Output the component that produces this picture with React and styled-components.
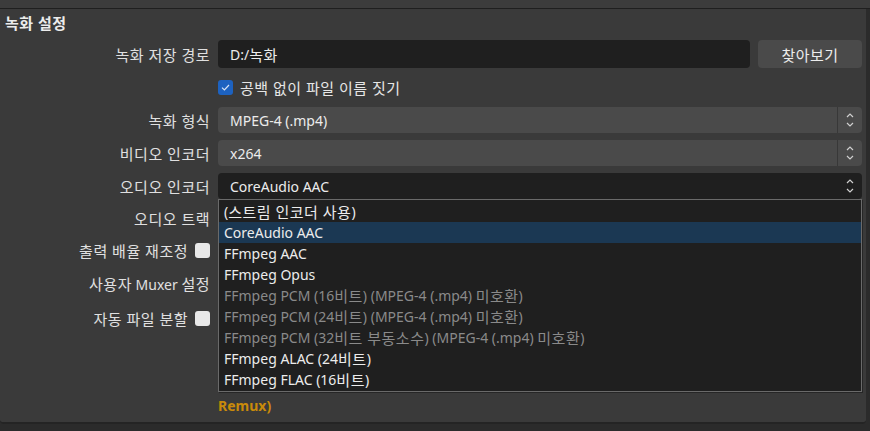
import styled, { createGlobalStyle } from "styled-components";

const GlobalStyle = createGlobalStyle`
  html, body {
    margin: 0;
    padding: 0;
    background: #2b2b2b;
  }
  body {
    font-family: "Noto Sans", "Noto Sans CJK KR", sans-serif;
    font-size: 14px;
    color: #e2e2e2;
  }
`;

const Page = styled.div`
  width: 870px;
  height: 431px;
  overflow: hidden;
  display: flex;
  flex-direction: column;
  background: #2b2b2b;
`;

const PrevGroup = styled.div`
  height: 8px;
  flex: none;
  background: #3c3c3c;
  border-bottom: 1px solid #1f1f1f;
`;

const GroupBox = styled.section`
  height: 415px;
  flex: none;
  margin-right: 4px;
  background: #3a3a3a;
  border-bottom: 2px solid #242424;
  border-radius: 0 0 4px 4px;
  box-sizing: border-box;
`;

const GroupTitle = styled.h2`
  margin: 3px 0 0 5px;
  height: 20px;
  display: flex;
  align-items: center;
  font-size: 14px;
  font-weight: 700;
  color: #ececec;
`;

/* Hangul runs are drawn a little larger and looser, like the Windows UI font */
const Ko = styled.span`
  font-size: 15px;
  letter-spacing: 0.5px;
`;

const Form = styled.div`
  margin-top: 8px;
  display: grid;
  grid-template-columns: 210px 1fr;
  column-gap: 8px;
  row-gap: 7px;
  padding-right: 4px;
`;

const Label = styled.div`
  height: ${(p) => p.$h || 26}px;
  display: flex;
  align-items: center;
  justify-content: flex-end;
  gap: 7px;
  white-space: nowrap;
  color: #e0e0e0;
`;

const Field = styled.div`
  height: ${(p) => p.$h || 26}px;
  position: relative;
`;

const PathRow = styled.div`
  display: flex;
  gap: 8px;
  height: 28px;
`;

const TextInput = styled.div`
  flex: 1;
  background: #1f1f1f;
  border-radius: 4px;
  padding-left: 12px;
  display: flex;
  align-items: center;
  color: #ececec;
`;

const Button = styled.div`
  width: 104px;
  background: #4a4a4a;
  border-radius: 4px;
  display: flex;
  align-items: center;
  justify-content: center;
  color: #ececec;
`;

const CheckRow = styled.div`
  height: 25px;
  display: flex;
  align-items: center;
  gap: 7px;
  color: #e6e6e6;
`;

const Box = styled.span`
  width: 15px;
  height: 15px;
  border-radius: 3px;
  box-sizing: border-box;
  display: inline-flex;
  align-items: center;
  justify-content: center;
  background: ${(p) => (p.$checked ? "#1d62c0" : "#e8e8e8")};
  flex: none;
`;

const Select = styled.div`
  height: 26px;
  display: flex;
  align-items: stretch;
  border-radius: 4px;
  background: ${(p) => (p.$open ? "#1f1f1f" : "#4a4a4a")};
  color: #ececec;
`;

const SelectText = styled.div`
  flex: 1;
  padding-left: 12px;
  display: flex;
  align-items: center;
`;

const Arrows = styled.div`
  width: 24px;
  display: flex;
  align-items: center;
  justify-content: center;
  border-left: 1px solid ${(p) => (p.$open ? "transparent" : "#383838")};
`;

const Dropdown = styled.ul`
  position: absolute;
  top: 100%;
  left: 0;
  right: 0;
  margin: 0;
  padding: 1px 0;
  list-style: none;
  background: #1f1f1f;
  border: 1px solid #6a6a6a;
  box-shadow: 1px 1px 0 #262626;
  z-index: 5;
`;

const Item = styled.li`
  height: 21px;
  padding-left: 5px;
  display: flex;
  align-items: center;
  white-space: pre;
  background: ${(p) => (p.$active ? "#1b3853" : "transparent")};
  color: ${(p) => (p.$disabled ? "#8a8a8a" : "#ececec")};
`;

const Warning = styled.div`
  padding-top: 57px;
  line-height: 18px;
  font-weight: 700;
  color: #c98a0a;
`;

const HANGUL = /([\uAC00-\uD7A3]+(?:\s+[\uAC00-\uD7A3]+)*)/;

const ko = (text) =>
  text.split(HANGUL).map((part, i) => (i % 2 ? <Ko key={i}>{part}</Ko> : part));

const Check = () => (
  <svg width="9" height="7" viewBox="0 0 9 7">
    <polyline points="1,3.6 3.4,6 8,1" fill="none" stroke="#d8e4f6" strokeWidth="1.2" />
  </svg>
);

const Chevrons = () => (
  <svg width="10" height="16" viewBox="0 0 10 16">
    <polyline points="2,5 5,2 8,5" fill="none" stroke="#d0d0d0" strokeWidth="1.2" />
    <polyline points="2,11 5,14 8,11" fill="none" stroke="#d0d0d0" strokeWidth="1.2" />
  </svg>
);

const audioEncoders = [
  { name: "(스트림 인코더 사용)" },
  { name: "CoreAudio AAC", active: true },
  { name: "FFmpeg AAC" },
  { name: "FFmpeg Opus" },
  { name: "FFmpeg PCM (16비트) (MPEG-4 (.mp4) 미호환)", disabled: true },
  { name: "FFmpeg PCM (24비트) (MPEG-4 (.mp4) 미호환)", disabled: true },
  { name: "FFmpeg PCM (32비트 부동소수) (MPEG-4 (.mp4) 미호환)", disabled: true },
  { name: "FFmpeg ALAC (24비트)" },
  { name: "FFmpeg FLAC (16비트)" },
];

export default function App() {
  return (
    <Page>
      <GlobalStyle />
      <PrevGroup />
      <GroupBox>
        <GroupTitle>{ko("녹화 설정")}</GroupTitle>
        <Form>
          <Label $h={28}>{ko("녹화 저장 경로")}</Label>
          <Field $h={28}>
            <PathRow>
              <TextInput>{ko("D:/녹화")}</TextInput>
              <Button>{ko("찾아보기")}</Button>
            </PathRow>
          </Field>

          <Label $h={25} />
          <CheckRow>
            <Box $checked>
              <Check />
            </Box>
            {ko("공백 없이 파일 이름 짓기")}
          </CheckRow>

          <Label>{ko("녹화 형식")}</Label>
          <Field>
            <Select>
              <SelectText>MPEG-4 (.mp4)</SelectText>
              <Arrows>
                <Chevrons />
              </Arrows>
            </Select>
          </Field>

          <Label>{ko("비디오 인코더")}</Label>
          <Field>
            <Select>
              <SelectText>x264</SelectText>
              <Arrows>
                <Chevrons />
              </Arrows>
            </Select>
          </Field>

          <Label>{ko("오디오 인코더")}</Label>
          <Field>
            <Select $open>
              <SelectText>CoreAudio AAC</SelectText>
              <Arrows $open>
                <Chevrons />
              </Arrows>
            </Select>
            <Dropdown>
              {audioEncoders.map((e) => (
                <Item key={e.name} $active={e.active} $disabled={e.disabled}>
                  {ko(e.name)}
                </Item>
              ))}
            </Dropdown>
          </Field>

          <Label $h={24}>{ko("오디오 트랙")}</Label>
          <Field $h={24} />

          <Label>
            <span>{ko("출력 배율 재조정")}</span>
            <Box />
          </Label>
          <Field />

          <Label>
            <span>{ko("사용자 Muxer 설정")}</span>
          </Label>
          <Field />

          <Label $h={30}>
            <span>{ko("자동 파일 분할")}</span>
            <Box />
          </Label>
          <Field $h={30} />

          <div />
          <Warning>Remux)</Warning>
        </Form>
      </GroupBox>
    </Page>
  );
}
